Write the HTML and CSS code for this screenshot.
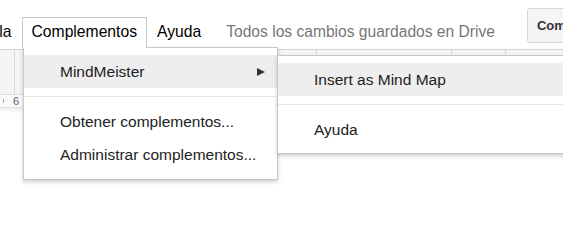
FILE: index.html
```html
<!DOCTYPE html>
<html lang="es">
<head>
  <meta charset="UTF-8" />
  <title>Complementos</title>
  <link rel="stylesheet" href="styles.css">
</head>
<body>

<div class="header">
  <div class="menubar">
    <div class="menu-item first">Tabla</div>
    <div class="menu-item active">Complementos</div>
    <div class="menu-item">Ayuda</div>
    <div class="status">Todos los cambios guardados en Drive</div>
  </div>
  <button class="share">Compartir</button>
</div>

<div class="toolbar">
  <div class="tb-cell" style="width:15px"></div>
  <div class="tb-cell" style="width:302px"></div>
  <div class="tb-cell" style="width:135px"></div>
  <div class="tb-cell" style="width:54px"></div>
  <div class="tb-cell last"></div>
</div>

<div class="ruler">
  <span class="tick"></span>
  <span class="ruler-num">6</span>
</div>

<!-- menu abierto: Complementos -->
<div class="dropdown">
  <div class="dd-row hover">
    <span>MindMeister</span>
    <span class="arrow"></span>
  </div>
  <div class="sep"></div>
  <div class="dd-row">Obtener complementos...</div>
  <div class="dd-row">Administrar complementos...</div>
</div>

<div class="submenu">
  <div class="dd-row hover">Insert as Mind Map</div>
  <div class="sep"></div>
  <div class="dd-row">Ayuda</div>
</div>

</body>
</html>
```

FILE: styles.css
```css
* { margin: 0; padding: 0; box-sizing: border-box; }

body {
  font-family: 'Liberation Sans', Arial, sans-serif;
  background: #fff;
  width: 563px;
  height: 248px;
  overflow: hidden;
  position: relative;
  color: #222;
}

.header {
  display: flex;
  align-items: flex-start;
  height: 49px;
  white-space: nowrap;
}

.menubar {
  display: flex;
  align-items: flex-start;
  margin-top: 17px;
  position: relative;
  z-index: 3;
}

.menu-item {
  font-size: 15.7px;
  line-height: 27px;
  padding: 0 9px 3px;
  border: 1px solid transparent;
  border-bottom: none;
  color: #000;
  flex-shrink: 0;
}

.menu-item.first { margin-left: -36px; }

.menu-item.active {
  background: #fff;
  border-color: #c6c6c6;
}

.status {
  font-size: 15.6px;
  line-height: 27px;
  margin-top: 1px;
  margin-left: 15px;
  color: #777;
  flex-shrink: 0;
}

.share {
  flex-shrink: 0;
  margin-top: 8px;
  margin-left: 32px;
  height: 35px;
  padding: 0 9px;
  font-family: 'Liberation Sans', Arial, sans-serif;
  font-weight: bold;
  font-size: 13px;
  color: #333;
  background: #f5f5f5;
  border: 1px solid #d6d6d6;
  border-radius: 3px;
}

.toolbar {
  display: flex;
  height: 45px;
  background: #f4f4f4;
  border-top: 1px solid #d3d3d3;
}

.tb-cell {
  flex-shrink: 0;
  border-right: 1px solid #d9d9d9;
}

.tb-cell.last { flex: 1; border-right: none; }

.ruler {
  display: flex;
  align-items: center;
  height: 14px;
  background: #fafafa;
  border-top: 1px solid #dcdcdc;
  border-bottom: 1px solid #e2e2e2;
  box-shadow: 0 2px 4px rgba(0,0,0,0.08);
  padding-left: 3px;
}

.tick {
  width: 1px;
  height: 4px;
  background: #aaa;
}

.ruler-num {
  font-size: 11px;
  margin-left: 9px;
  color: #56627a;
}

.dropdown, .submenu {
  position: absolute;
  background: #fff;
  border: 1px solid #c8c8c8;
  box-shadow: 0 2px 4px rgba(0,0,0,0.2);
  font-size: 15.5px;
}

.dropdown {
  left: 23px;
  top: 47px;
  width: 255px;
  padding: 7px 0 8px;
  z-index: 2;
}

.submenu {
  left: 277px;
  top: 55px;
  width: 320px;
  padding: 7px 0;
  z-index: 2;
}

.dd-row {
  display: flex;
  align-items: center;
  justify-content: space-between;
  height: 33px;
  padding: 0 12px 0 36px;
  color: #222;
  white-space: nowrap;
}

.dd-row.hover { background: #eee; }

.arrow {
  width: 0;
  height: 0;
  border-left: 8px solid #333;
  border-top: 4px solid transparent;
  border-bottom: 4px solid transparent;
}

.sep {
  height: 1px;
  background: #e5e5e5;
  margin: 8px 0;
}
```
